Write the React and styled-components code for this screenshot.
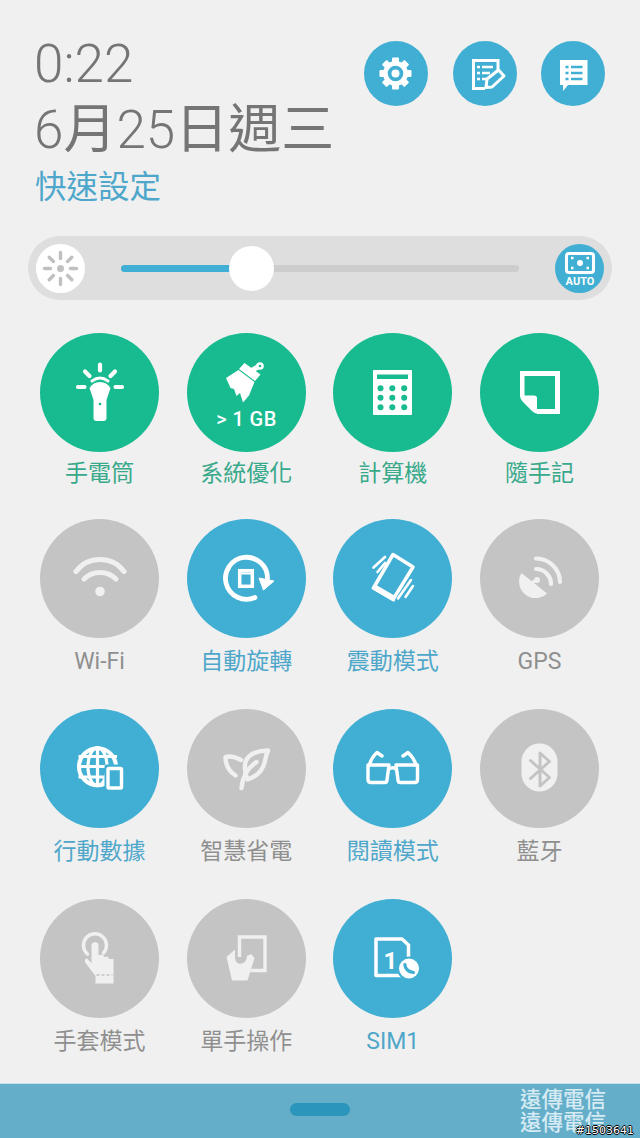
import React from 'react';
import styled, { createGlobalStyle } from 'styled-components';

const GREEN = '#17bb8f';
const BLUE = '#41afd3';
const GREY = '#c4c4c4';

const circleColors = { green: GREEN, blue: BLUE, grey: GREY };
const labelColors = { green: '#38a98b', blue: '#4ea7ca', grey: '#8f8f8f' };

const GlobalStyle = createGlobalStyle`
  html, body {
    margin: 0;
    padding: 0;
    background: #f0f0f0;
  }
`;

const Page = styled.div`
  width: 640px;
  height: 1138px;
  display: flex;
  flex-direction: column;
  overflow: hidden;
  background: #f0f0f0;
  font-family: Roboto, "Noto Sans CJK TC", sans-serif;
`;

const Header = styled.header`
  display: flex;
  justify-content: space-between;
  align-items: flex-start;
  height: 202px;
  padding: 34px 35px 0 34px;
  box-sizing: border-box;
`;

const Clock = styled.div`
  display: flex;
  flex-direction: column;
  color: #757575;
  font-weight: 300;
  font-size: 53px;
`;

const Time = styled.div`
  line-height: 60px;
`;

const DateLine = styled.div`
  line-height: 64px;
  margin-top: 4px;
`;

const Han = styled.span`
  font-weight: 400;
`;

const Title = styled.div`
  font-size: 31.5px;
  line-height: 40px;
  margin: 6px 0 0 1px;
  font-weight: 400;
  color: #4ea7ca;
`;

const Actions = styled.div`
  display: flex;
  gap: 24.5px;
  margin-top: 7px;
`;

const ActionButton = styled.div`
  --cut: ${BLUE};
  width: 64px;
  height: 65px;
  border-radius: 50%;
  background: ${BLUE};
  svg {
    display: block;
  }
`;

const Slider = styled.div`
  display: flex;
  align-items: center;
  height: 64px;
  margin: 34px 28px 0;
  padding: 0 8px;
  border-radius: 32px;
  background: #dedede;
`;

const SunButton = styled.div`
  width: 49px;
  height: 49px;
  flex: none;
  border-radius: 50%;
  background: #fff;
  svg {
    display: block;
  }
`;

const AutoButton = styled.div`
  --cut: ${BLUE};
  width: 49px;
  height: 49px;
  flex: none;
  border-radius: 50%;
  background: ${BLUE};
  svg {
    display: block;
  }
`;

const Track = styled.div`
  position: relative;
  flex: 1;
  height: 7px;
  margin: 0 36px;
  border-radius: 4px;
  background: #cdcdcd;
`;

const TrackFill = styled.div`
  height: 100%;
  border-radius: 4px;
  background: ${BLUE};
`;

const Thumb = styled.div`
  position: absolute;
  top: 50%;
  width: 45px;
  height: 45px;
  margin: -22.5px 0 0 -22.5px;
  border-radius: 50%;
  background: #fff;
`;

const Grid = styled.div`
  display: grid;
  grid-template-columns: repeat(4, 119px);
  grid-template-rows: 186px 190px 190px auto;
  column-gap: 27.67px;
  margin-top: 33px;
  padding-left: 40px;
`;

const Tile = styled.div`
  display: flex;
  flex-direction: column;
  align-items: center;
`;

const Circle = styled.div`
  --cut: ${(p) => circleColors[p.$tone]};
  width: 119px;
  height: 119px;
  border-radius: 50%;
  background: ${(p) => circleColors[p.$tone]};
  color: ${(p) => (p.$tone === 'grey' ? '#f0f0f0' : '#fff')};
  svg {
    display: block;
  }
`;

const Label = styled.div`
  margin-top: ${(p) => (p.$tight ? '7px' : '9px')};
  font-size: 23px;
  line-height: 30px;
  white-space: nowrap;
  color: ${(p) => labelColors[p.$tone]};
`;

const Footer = styled.footer`
  position: relative;
  display: grid;
  grid-template-columns: 1fr 60px 1fr;
  align-items: start;
  box-sizing: border-box;
  height: 55px;
  margin-top: auto;
  border-top: 1px solid #c0e0ec;
  background: #64aeca;
  overflow: hidden;
`;

const Handle = styled.div`
  grid-column: 2;
  height: 13px;
  margin-top: 19px;
  border-radius: 7px;
  background: #2b95bc;
`;

const Carrier = styled.div`
  grid-column: 3;
  justify-self: end;
  margin: 4px 34px 0 0;
  font-size: 21.5px;
  line-height: 23px;
  font-weight: 500;
  color: #d6ebf3;
`;

const Watermark = styled.div`
  position: absolute;
  right: 6px;
  bottom: 1px;
  font-family: "DejaVu Sans", sans-serif;
  font-size: 11px;
  line-height: 13px;
  color: #fff;
  text-shadow: 1px 0 0 #000, -1px 0 0 #000, 0 1px 0 #000, 0 -1px 0 #000;
`;

const Svg = ({ size = 119, children }) => (
  <svg width={size} height={size} viewBox={`0 0 ${size} ${size}`} fill="none">
    {children}
  </svg>
);

const Gear = () => (
  <Svg size={65}>
    {[0, 45, 90, 135, 180, 225, 270, 315].map((a) => (
      <rect key={a} x="28" y="16.5" width="7" height="8" rx="1" fill="#fff" transform={`rotate(${a} 31.5 32.5)`} />
    ))}
    <circle cx="31.5" cy="32.5" r="12.5" fill="#fff" />
    <circle cx="31.5" cy="32.5" r="7.8" fill="var(--cut)" />
    <circle cx="31.5" cy="32.5" r="4" fill="#fff" />
  </Svg>
);

const NoteEdit = () => (
  <Svg size={65}>
    <path d="M45 29V19.5H20.5V47.5H32" stroke="#fff" strokeWidth="3" />
    <path d="M24 26h3M24 32h3M24 38h3M29 26h11M29 32h8M29 38h4" stroke="#fff" strokeWidth="2.4" />
    <path d="M34 38L45.5 29L51 35L39 46L33 46.5Z" fill="var(--cut)" stroke="#fff" strokeWidth="3" strokeLinejoin="round" />
  </Svg>
);

const ChatList = () => (
  <Svg size={65}>
    <path d="M19 19H46.5V44H27L22 50V44H19Z" fill="#fff" />
    <path d="M24.5 26h3M24.5 32h3M24.5 38h3M30 26h11.5M30 32h11.5M30 38h11.5" stroke="var(--cut)" strokeWidth="2.4" />
  </Svg>
);

const Sun = () => (
  <Svg size={49}>
    <circle cx="24.5" cy="24.5" r="3.5" fill="#c0c0c0" />
    {[0, 45, 90, 135, 180, 225, 270, 315].map((a) => (
      <line key={a} x1="24.5" y1="14.5" x2="24.5" y2="8.5" stroke="#c0c0c0" strokeWidth="3.4" strokeLinecap="round" transform={`rotate(${a} 24.5 24.5)`} />
    ))}
  </Svg>
);

const AutoIcon = () => (
  <Svg size={49}>
    <rect x="11.5" y="9.5" width="27" height="19" rx="2.5" stroke="#fff" strokeWidth="3" />
    <circle cx="25" cy="19" r="3" fill="#fff" />
    <path d="M16 14h2.500M31.500 14h2.500M16 24h2.500M31.500 24h2.500" stroke="#fff" strokeWidth="2.400" />
    <text x="25" y="41" textAnchor="middle" fontFamily="Roboto, sans-serif" fontWeight="700" fontSize="11" fill="#fff">AUTO</text>
  </Svg>
);

const Flashlight = () => (
  <Svg>
    <path d="M60 31.500v6M45 38.500l4.500 4.500M75 38.500l-4.500 4.500M38 54H44.500M75.500 54H82" stroke="#fff" strokeWidth="4.200" strokeLinecap="round" />
    <path d="M52 48q8-6 16 0" stroke="#fff" strokeWidth="3" strokeLinecap="round" />
    <path d="M60 49Q67 49 70.500 55L66.500 67V85Q66.500 88 63.500 88H56.500Q53.500 88 53.500 85V67L49.500 55Q53 49 60 49Z" fill="#fff" />
    <circle cx="60" cy="71" r="1.300" fill="var(--cut)" />
  </Svg>
);

const Broom = () => (
  <Svg>
    <path d="M52 36L57.500 30L73.500 41.500L68 48Z" fill="#fff" />
    <path d="M64 38L71.500 33.500" stroke="#fff" strokeWidth="5" />
    <circle cx="73" cy="33" r="3.800" fill="#fff" />
    <circle cx="73" cy="33" r="1.300" fill="var(--cut)" />
    <path d="M39 45L51.500 37L67.500 49L62 62.500L56 69.500L53 60L49.500 63L47 56L43.500 55Z" fill="#fff" />
    <text x="59.500" y="93" textAnchor="middle" fontFamily="Roboto, sans-serif" fontWeight="500" fontSize="20" letterSpacing="0.4" fill="#fff">{'> 1 GB'}</text>
  </Svg>
);

const Calculator = () => (
  <Svg>
    <rect x="40" y="37" width="39" height="45" rx="1" fill="#fff" />
    <rect x="44" y="41.500" width="31" height="4.500" fill="var(--cut)" />
    {[55.3, 64.7, 74.3].map((y) =>
      [47.5, 59.3, 71.2].map((x) => <circle key={`${x}-${y}`} cx={x} cy={y} r="3" fill="var(--cut)" />)
    )}
  </Svg>
);

const StickyNote = () => (
  <Svg>
    <path d="M40 38H80V81H58Q55 81 52 78L43 69Q40 66 40 63Z" fill="#fff" />
    <path d="M44.500 43H75V76H57V65Q57 62.500 54 62.500H44.500Z" fill="var(--cut)" />
  </Svg>
);

const Wifi = () => (
  <Svg>
    <path d="M36 52.500A30 30 0 0 1 84 52.500M44 60A23 23 0 0 1 76 60" stroke="currentColor" strokeWidth="5" strokeLinecap="round" />
    <circle cx="60" cy="72.500" r="4.800" fill="currentColor" />
  </Svg>
);

const Rotate = () => (
  <Svg>
    <path d="M68 78.500A21 21 0 1 1 80.500 60" stroke="#fff" strokeWidth="4.800" strokeLinecap="round" />
    <path d="M72 59L87 62L76.500 71Z" fill="#fff" stroke="#fff" strokeWidth="1" strokeLinejoin="round" />
    <rect x="52.700" y="51.700" width="12.600" height="15.600" stroke="#fff" strokeWidth="3.500" />
    <path d="M52 54.500h14" stroke="#fff" strokeWidth="2" />
  </Svg>
);

const Vibrate = () => (
  <Svg>
    <path d="M60 35.500L80 48L60 80.500L40.500 69Z" stroke="#fff" strokeWidth="3.500" strokeLinejoin="round" />
    <path d="M42 67L61 78L60.500 80.500L40.500 69Z" fill="#fff" stroke="#fff" strokeWidth="3" />
    <path d="M40.500 48.500L52 38M44.500 53L52 44M65 79.500L78 61M72.500 78L80 67" stroke="#fff" strokeWidth="2.600" strokeLinecap="round" />
  </Svg>
);

const Gps = () => (
  <Svg>
    <path d="M41.500 54L67 74.500A16.500 16.500 0 0 1 41.500 54Z" fill="currentColor" />
    <path d="M50 65L57 60.500" stroke="currentColor" strokeWidth="3" />
    <circle cx="57" cy="61" r="3" fill="currentColor" />
    <path d="M56 39.500A24 24 0 0 1 80 63M56 50A15 15 0 0 1 71 65" stroke="currentColor" strokeWidth="4.200" strokeLinecap="round" />
  </Svg>
);

const GlobeData = () => (
  <Svg>
    <circle cx="57.500" cy="57.700" r="18.500" stroke="#fff" strokeWidth="4" />
    <ellipse cx="57.500" cy="57.700" rx="9.500" ry="19" stroke="#fff" strokeWidth="3.200" />
    <path d="M57.500 38V77M38.500 47.500H77M38.500 57.500H77M38.500 68H77" stroke="#fff" strokeWidth="3.200" />
    <rect x="64.500" y="55.500" width="20.500" height="27" rx="2" fill="var(--cut)" />
    <rect x="68" y="59.500" width="13.500" height="19.500" rx="1" stroke="#fff" strokeWidth="3.400" />
  </Svg>
);

const Leaf = () => (
  <Svg>
    <path d="M81 41.500Q62 42 58.500 53Q56.500 62 60.500 70.500Q75 66 78 52Q79 46 81 41.500Z" stroke="currentColor" strokeWidth="4.400" strokeLinejoin="round" />
    <path d="M54.500 79Q56 62 69.500 53" stroke="currentColor" strokeWidth="4.400" strokeLinecap="round" />
    <path d="M54 51Q45 46 38.500 48Q38.500 60 48.500 66.500" stroke="currentColor" strokeWidth="4.400" strokeLinecap="round" strokeLinejoin="round" />
  </Svg>
);

const Glasses = () => (
  <Svg>
    <path d="M35 56H56L54 71Q54 73.500 51.500 73.500H38Q35 73.500 35 70.500ZM63 56H84.500V70.500Q84.500 73.500 81.500 73.500H67.500Q65 73.500 65 71Z" stroke="#fff" strokeWidth="3.400" strokeLinejoin="round" />
    <path d="M56 60Q59.500 57.500 63 60M36.500 56Q38 49 44 43.500L49 47M83 56Q81 49 75 43.500L70 47" stroke="#fff" strokeWidth="3.400" strokeLinecap="round" strokeLinejoin="round" />
  </Svg>
);

const Bluetooth = () => (
  <Svg>
    <rect x="41.500" y="34.500" width="36" height="48" rx="18" fill="currentColor" />
    <path d="M50.500 51.500L69.500 68.500L60 77V44L69.500 52.500L50.500 69.500" stroke="var(--cut)" strokeWidth="3" strokeLinecap="round" strokeLinejoin="round" />
  </Svg>
);

const Glove = () => (
  <Svg>
    <path d="M47.500 55A11.500 11.500 0 1 1 63.500 54" stroke="currentColor" strokeWidth="3.500" strokeLinecap="round" />
    <path d="M51.500 45Q55 41 58.500 45V56L63 55.500L64 58L68 57.500L69 60L73.500 60V84.500H55.500V77L45.500 64Q43.500 60 47 59.500L51.500 64Z" fill="currentColor" />
    <path d="M56.500 76H72.500" stroke="var(--cut)" strokeWidth="1.500" strokeDasharray="3 2" />
  </Svg>
);

const OneHand = () => (
  <Svg>
    <path d="M52.500 58V38H78V71.500H63.500" stroke="currentColor" strokeWidth="3.400" />
    <path d="M39.500 58L48 50.500V59Q49 66 55 64.500Q59.500 63 60 57L64 55L67.500 59L60.500 81.500H45Z" fill="currentColor" />
  </Svg>
);

const Sim = () => (
  <Svg>
    <path d="M43 40H69L75.500 46V76.500H43Z" stroke="#fff" strokeWidth="3.500" strokeLinejoin="round" />
    <text x="57.500" y="69.500" textAnchor="middle" fontFamily="Roboto, sans-serif" fontWeight="700" fontSize="24" fill="#fff">1</text>
    <circle cx="76" cy="69.500" r="12" fill="var(--cut)" />
    <circle cx="76" cy="69.500" r="10" fill="#fff" />
    <path d="M71.800 65.500Q72.500 72.500 80.500 73.500" stroke="var(--cut)" strokeWidth="3.200" strokeLinecap="round" />
  </Svg>
);

const tiles = [
  { label: '手電筒', tone: 'green', Icon: Flashlight },
  { label: '系統優化', tone: 'green', Icon: Broom },
  { label: '計算機', tone: 'green', Icon: Calculator },
  { label: '隨手記', tone: 'green', Icon: StickyNote },
  { label: 'Wi-Fi', tone: 'grey', Icon: Wifi },
  { label: '自動旋轉', tone: 'blue', Icon: Rotate },
  { label: '震動模式', tone: 'blue', Icon: Vibrate },
  { label: 'GPS', tone: 'grey', Icon: Gps },
  { label: '行動數據', tone: 'blue', Icon: GlobeData },
  { label: '智慧省電', tone: 'grey', Icon: Leaf },
  { label: '閱讀模式', tone: 'blue', Icon: Glasses },
  { label: '藍牙', tone: 'grey', Icon: Bluetooth },
  { label: '手套模式', tone: 'grey', Icon: Glove },
  { label: '單手操作', tone: 'grey', Icon: OneHand },
  { label: 'SIM1', tone: 'blue', Icon: Sim },
];

const brightness = 32.8;

const App = () => {
  return (
    <Page>
      <GlobalStyle />
      <Header>
        <Clock>
          <Time>0:22</Time>
          <DateLine>6<Han>月</Han>25<Han>日週三</Han></DateLine>
          <Title>快速設定</Title>
        </Clock>
        <Actions>
          <ActionButton><Gear /></ActionButton>
          <ActionButton><NoteEdit /></ActionButton>
          <ActionButton><ChatList /></ActionButton>
        </Actions>
      </Header>

      <Slider>
        <SunButton><Sun /></SunButton>
        <Track>
          <TrackFill style={{ width: `${brightness}%` }} />
          <Thumb style={{ left: `${brightness}%` }} />
        </Track>
        <AutoButton><AutoIcon /></AutoButton>
      </Slider>

      <Grid>
        {tiles.map(({ label, tone, Icon }, i) => (
          <Tile key={label}>
            <Circle $tone={tone}><Icon /></Circle>
            <Label $tone={tone} $tight={i < 4}>{label}</Label>
          </Tile>
        ))}
      </Grid>

      <Footer>
        <Handle />
        <Carrier>遠傳電信<br />遠傳電信</Carrier>
        <Watermark>#1503641</Watermark>
      </Footer>
    </Page>
  );
};

export default App;
